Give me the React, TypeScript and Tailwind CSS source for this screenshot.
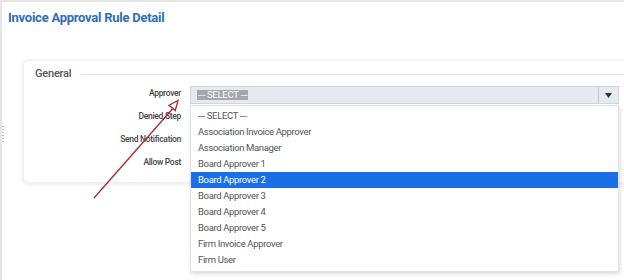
import React from "react";

const items = [
  "--- SELECT ---",
  "Association Invoice Approver",
  "Association Manager",
  "Board Approver 1",
  "Board Approver 2",
  "Board Approver 3",
  "Board Approver 4",
  "Board Approver 5",
  "Firm Invoice Approver",
  "Firm User",
];

const labels = ["Approver", "Denied Step", "Send Notification", "Allow Post"];

export default function App() {
  return (
    <div
      className="relative w-[624px] h-[280px] overflow-hidden bg-white border-t-2 border-l-2 border-[#e6e6e6]"
      style={{ fontFamily: '"Roboto", "Liberation Sans", sans-serif' }}
    >
      <div className="absolute left-0 top-[124px] flex flex-col gap-[2px]">
        {Array.from({ length: 6 }).map((_, i) => (
          <div key={i} className="w-[2px] h-[1px] bg-[#b8b8b8]" />
        ))}
      </div>
      <div className="pt-[8px] pl-[6px] text-[13px] leading-[16px] font-bold tracking-[-0.25px] text-[#2e6db4]">
        Invoice Approval Rule Detail
      </div>
      <div className="ml-[21px] mt-[34px] w-[620px] h-[123px] bg-white rounded-sm shadow-[0_1px_4px_rgba(0,0,0,0.10)] border border-[#f0f0f0]">
        <div className="flex items-center pt-[7px] pl-[11px]">
          <span className="text-[11px] leading-[12px] font-medium tracking-[-0.2px] text-[#555]">General</span>
          <div className="ml-[10px] flex-1 h-px bg-[#dfe6ee]" />
        </div>
        <div className="mt-[6px] flex flex-col gap-[5px]">
          {labels.map((l, i) => (
            <div key={l} className="flex items-center h-[18px]">
              <div className="w-[157px] shrink-0 text-right text-[8.5px] font-medium tracking-[-0.3px] text-[#444] -mt-[3px]">
                {l}
              </div>
              <div className="ml-[9px]">
                {i === 0 && (
                  <div className="relative w-[429px] h-[18px] bg-[#e5eaf1] border border-[#cfd6df] flex items-center">
                    <span className="ml-[6px] px-[1px] bg-[#a3a7ab] text-white text-[9.5px] leading-[10px] tracking-[-0.3px]">
                      --- SELECT ---
                    </span>
                    <div className="ml-auto w-[20px] h-full border-l border-[#c3cad3] flex items-center justify-center">
                      <svg width="7" height="5" viewBox="0 0 7 5">
                        <path d="M0 0 H7 L3.5 5 Z" fill="#333" />
                      </svg>
                    </div>
                    <div className="absolute left-[-1px] top-[18px] w-[429px] bg-white border border-[#e4e4e4] shadow-[1px_2px_4px_rgba(0,0,0,0.15)] pt-[2px] pb-[3px] z-10">
                      {items.map((it, j) => (
                        <div
                          key={it}
                          className={
                            "h-[16px] pl-[7px] flex items-center text-[9.5px] tracking-[-0.35px] " +
                            (j === 4 ? "bg-[#1a6fe6] text-white" : "text-[#555]")
                          }
                        >
                          {it}
                        </div>
                      ))}
                    </div>
                  </div>
                )}
              </div>
            </div>
          ))}
        </div>
      </div>
      <svg className="absolute left-0 top-0 pointer-events-none z-20" width="624" height="280">
        <line x1="92" y1="196" x2="173" y2="104" stroke="#a8282c" strokeWidth="1.3" />
        <polygon points="176,98.5 173.3,108.5 167.1,103.3" fill="white" stroke="#a8282c" strokeWidth="1.3" strokeLinejoin="miter" />
      </svg>
    </div>
  );
}
